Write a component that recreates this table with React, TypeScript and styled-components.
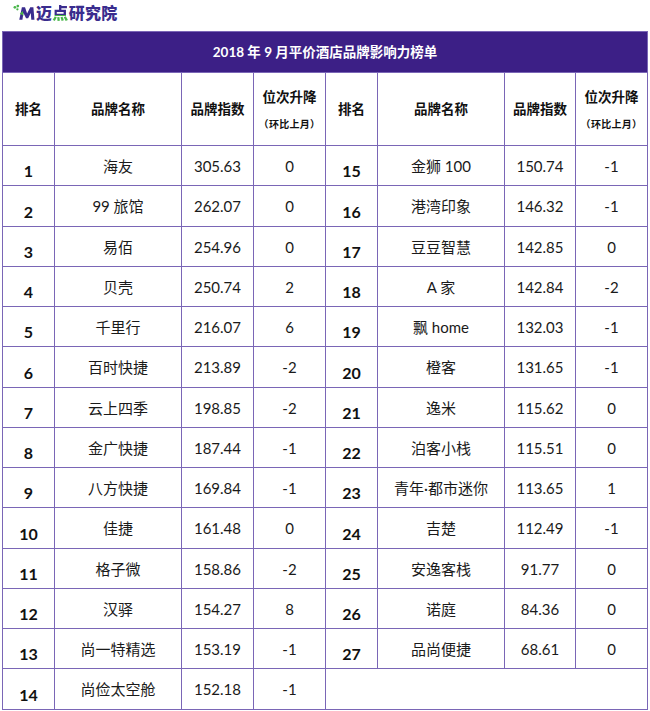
import React from "react";
import styled, { createGlobalStyle } from "styled-components";

const GlobalStyle = createGlobalStyle`
  html, body {
    margin: 0;
    padding: 0;
    background: #ffffff;
  }
  body {
    font-family: "Lato", "Noto Sans CJK SC", sans-serif;
    color: #1a1a1a;
  }
`;

const LINE = "#7a66b6";
const BAND = "#3c1f86";

const Page = styled.div`
  width: 650px;
`;

const LogoBar = styled.div`
  height: 31px;
  display: flex;
  align-items: flex-start;
  padding: 3px 0 0 13px;
  box-sizing: border-box;
`;

const LogoText = styled.span`
  font-family: "Noto Sans CJK SC", sans-serif;
  font-weight: 900;
  font-size: 16px;
  line-height: 19px;
  letter-spacing: 0.3px;
  color: #3a2c8e;
`;

const Green = styled.span`
  color: #3a2c8e;
  background: linear-gradient(180deg, #3a2c8e 62%, #49b64a 62%);
  -webkit-background-clip: text;
  background-clip: text;
  -webkit-text-fill-color: transparent;
`;

const Table = styled.table`
  border-collapse: collapse;
  table-layout: fixed;
  width: 645px;
  margin-left: 2px;
`;

const Row = styled.tr<{ $h: number }>`
  height: ${(p) => p.$h}px;
`;

const TitleCell = styled.td`
  background: ${BAND};
  border: 1px solid ${LINE};
  color: #ffffff;
  font-family: "Lato", "Noto Sans CJK SC", sans-serif;
  font-weight: 700;
  font-size: 13.5px;
  line-height: 16px;
  text-align: center;
  vertical-align: middle;
  padding: 0 0 1px;
`;

const HeadCell = styled.td`
  border: 1px solid ${LINE};
  font-family: "Noto Sans CJK SC", sans-serif;
  font-weight: 700;
  font-size: 13.5px;
  line-height: 18px;
  color: #111111;
  text-align: center;
  vertical-align: middle;
  padding: 0 0 2px;
`;

const SubHead = styled.div`
  font-size: 10px;
  line-height: 12px;
  margin-top: 13px;
  letter-spacing: 0.3px;
`;

const RankCell = styled.td`
  border: 1px solid ${LINE};
  font-family: "Lato", "Noto Sans CJK SC", sans-serif;
  font-weight: 700;
  font-size: 16px;
  line-height: 18px;
  color: #111111;
  text-align: center;
  vertical-align: bottom;
  padding: 0 0 5px;
`;

const DataCell = styled.td`
  border: 1px solid ${LINE};
  font-family: "Lato", "Noto Sans CJK SC", sans-serif;
  font-size: 15px;
  line-height: 18px;
  color: #1a1a1a;
  text-align: center;
  vertical-align: middle;
  padding: 1px 0 0;
  white-space: nowrap;
`;

const EmptyCell = styled.td`
  border: 1px solid ${LINE};
`;

type Entry = [number, string, string, string];

const LEFT: Entry[] = [
  [1, "海友", "305.63", "0"],
  [2, "99 旅馆", "262.07", "0"],
  [3, "易佰", "254.96", "0"],
  [4, "贝壳", "250.74", "2"],
  [5, "千里行", "216.07", "6"],
  [6, "百时快捷", "213.89", "-2"],
  [7, "云上四季", "198.85", "-2"],
  [8, "金广快捷", "187.44", "-1"],
  [9, "八方快捷", "169.84", "-1"],
  [10, "佳捷", "161.48", "0"],
  [11, "格子微", "158.86", "-2"],
  [12, "汉驿", "154.27", "8"],
  [13, "尚一特精选", "153.19", "-1"],
  [14, "尚俭太空舱", "152.18", "-1"],
];

const RIGHT: Entry[] = [
  [15, "金狮 100", "150.74", "-1"],
  [16, "港湾印象", "146.32", "-1"],
  [17, "豆豆智慧", "142.85", "0"],
  [18, "A 家", "142.84", "-2"],
  [19, "飘 home", "132.03", "-1"],
  [20, "橙客", "131.65", "-1"],
  [21, "逸米", "115.62", "0"],
  [22, "泊客小栈", "115.51", "0"],
  [23, "青年·都市迷你", "113.65", "1"],
  [24, "吉楚", "112.49", "-1"],
  [25, "安逸客栈", "91.77", "0"],
  [26, "诺庭", "84.36", "0"],
  [27, "品尚便捷", "68.61", "0"],
];

const COLS = [52, 127, 72, 72, 52, 127, 71, 72];

const LogoMark = () => (
  <svg width="23" height="17" viewBox="0 0 22 16" style={{ marginTop: 1 }}>
    <circle cx="1.8" cy="3" r="1.3" fill="#49b64a" />
    <circle cx="4.6" cy="1.8" r="1.3" fill="#49b64a" />
    <circle cx="4.2" cy="5" r="1.1" fill="#49b64a" />
    <path
      d="M6 15 L8.5 3 L11.5 3 L13.5 9 L16.5 3 L19.5 3 L20.5 15 L17.5 15 L17 8.5 L14.5 13.5 L12.5 13.5 L10 8.5 L9 15 Z"
      fill="#3a2c8e"
    />
    <path d="M6.5 9 L9.5 6.5 L10 11 Z" fill="#49b64a" />
  </svg>
);

const Cells = ({ e }: { e: Entry }) => (
  <>
    <RankCell>{e[0]}</RankCell>
    <DataCell>{e[1]}</DataCell>
    <DataCell>{e[2]}</DataCell>
    <DataCell>{e[3]}</DataCell>
  </>
);

const HeadGroup = () => (
  <>
    <HeadCell>排名</HeadCell>
    <HeadCell>品牌名称</HeadCell>
    <HeadCell>品牌指数</HeadCell>
    <HeadCell>
      位次升降
      <SubHead>（环比上月）</SubHead>
    </HeadCell>
  </>
);

export default function App() {
  return (
    <Page>
      <GlobalStyle />
      <LogoBar>
        <LogoMark />
        <LogoText>
          迈<Green>点</Green>研究院
        </LogoText>
      </LogoBar>
      <Table>
        <colgroup>
          {COLS.map((w, i) => (
            <col key={i} style={{ width: w }} />
          ))}
        </colgroup>
        <tbody>
          <Row $h={41}>
            <TitleCell colSpan={8}>2018 年 9 月平价酒店品牌影响力榜单</TitleCell>
          </Row>
          <Row $h={73}>
            <HeadGroup />
            <HeadGroup />
          </Row>
          {LEFT.map((l, i) => (
            <Row $h={40.25} key={l[0]}>
              <Cells e={l} />
              {RIGHT[i] ? <Cells e={RIGHT[i]} /> : <EmptyCell colSpan={4} />}
            </Row>
          ))}
        </tbody>
      </Table>
    </Page>
  );
}
